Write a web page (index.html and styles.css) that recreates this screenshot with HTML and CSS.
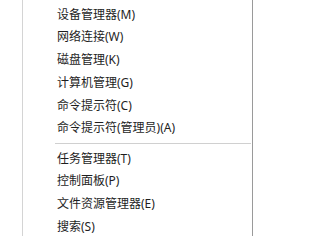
FILE: index.html
```html
<!DOCTYPE html>
<html lang="zh-CN">
<head>
<meta charset="utf-8">
<link rel="stylesheet" href="styles.css">
</head>
<body>
<div class="frame">
  <div class="menu">
    <ul class="group">
      <li class="item">设备管理器(M)</li>
      <li class="item">网络连接(W)</li>
      <li class="item">磁盘管理(K)</li>
      <li class="item">计算机管理(G)</li>
      <li class="item">命令提示符(C)</li>
      <li class="item">命令提示符(管理员)(A)</li>
    </ul>
    <div class="sep"></div>
    <ul class="group">
      <li class="item">任务管理器(T)</li>
      <li class="item">控制面板(P)</li>
      <li class="item">文件资源管理器(E)</li>
      <li class="item">搜索(S)</li>
    </ul>
  </div>
</div>
</body>
</html>
```

FILE: styles.css
```css
html, body {
  margin: 0;
  padding: 0;
  background: #ffffff;
}
.frame {
  width: 255px;
  height: 236px;
  overflow: hidden;
  display: flex;
}
.menu {
  margin-left: 22px;
  width: 229px;
  height: 300px;
  border-left: 1px solid #d4d4d4;
  border-right: 1px solid #9a9a9a;
  padding-top: 3.5px;
  box-sizing: content-box;
  font-family: "Noto Sans", "Noto Sans CJK SC", sans-serif;
  font-size: 12px;
  color: #1e1e1e;
}
.group {
  list-style: none;
  margin: 0;
  padding: 0;
}
.item {
  height: 22.8px;
  line-height: 22.8px;
  padding-left: 34px;
  white-space: nowrap;
}
.sep {
  height: 1px;
  background: #d0d0d0;
  margin: 3px 1px 3.3px 32px;
}
```
